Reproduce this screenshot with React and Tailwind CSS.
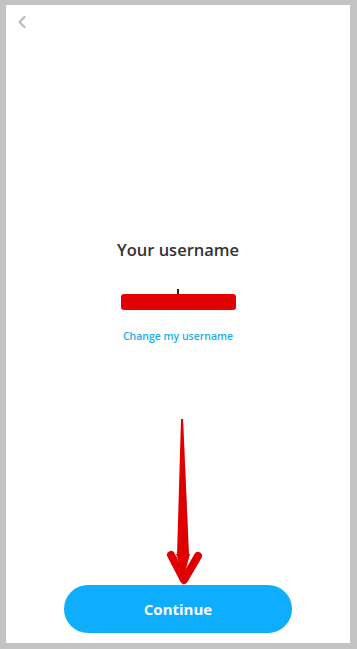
import { ChevronLeft } from "lucide-react";

export default function App() {
  return (
    <div className="h-[649px] w-[357px] bg-[#c3c3c3] pt-[5px] pb-[6px] pl-[6px] pr-[7px]">
      <div className="relative flex h-full flex-col bg-white font-['Open_Sans',sans-serif]">
        {/* header */}
        <div className="flex h-[40px] items-start px-[6px] pt-[7px]">
          <ChevronLeft size={20} strokeWidth={2.75} className="text-[#bcbcbc]" />
        </div>

        {/* username block */}
        <div className="flex flex-col items-center pt-[193px]">
          <h1 className="text-[16.5px] font-semibold leading-[24px] text-[#333]">Your username</h1>
          <div className="relative mt-[27px] flex flex-col items-center">
            <span className="h-[6px] w-[2px] bg-[#222]" />
            <span className="mt-[-1px] h-[16px] w-[115px] rounded-[3px] bg-[#e30000]" />
          </div>
          <button className="mt-[18px] text-[10.5px] font-semibold leading-[16px] text-[#1aaeee]">
            Change my username
          </button>
        </div>

        {/* annotation arrow */}
        <svg
          className="absolute left-[154px] top-[413px]"
          width="50"
          height="172"
          viewBox="0 0 50 172"
        >
          <path d="M21 1 L23 1 L29 138 L17 138 Z" fill="#e00000" />
          <path d="M23 1 L29 138 L23 138 Z" fill="#c80000" opacity="0.35" />
          <path
            d="M11 137 L24 162 L38 138"
            fill="none"
            stroke="#e00000"
            strokeWidth="8"
            strokeLinecap="round"
            strokeLinejoin="round"
          />
          <path d="M16 136 L30 136 L24 158 Z" fill="#e00000" />
        </svg>

        {/* continue */}
        <div className="mt-auto flex justify-center pb-[10px]">
          <button className="h-[48px] w-[228px] rounded-full bg-[#0eadfe] text-[15px] font-bold text-white">
            Continue
          </button>
        </div>
      </div>
    </div>
  );
}
